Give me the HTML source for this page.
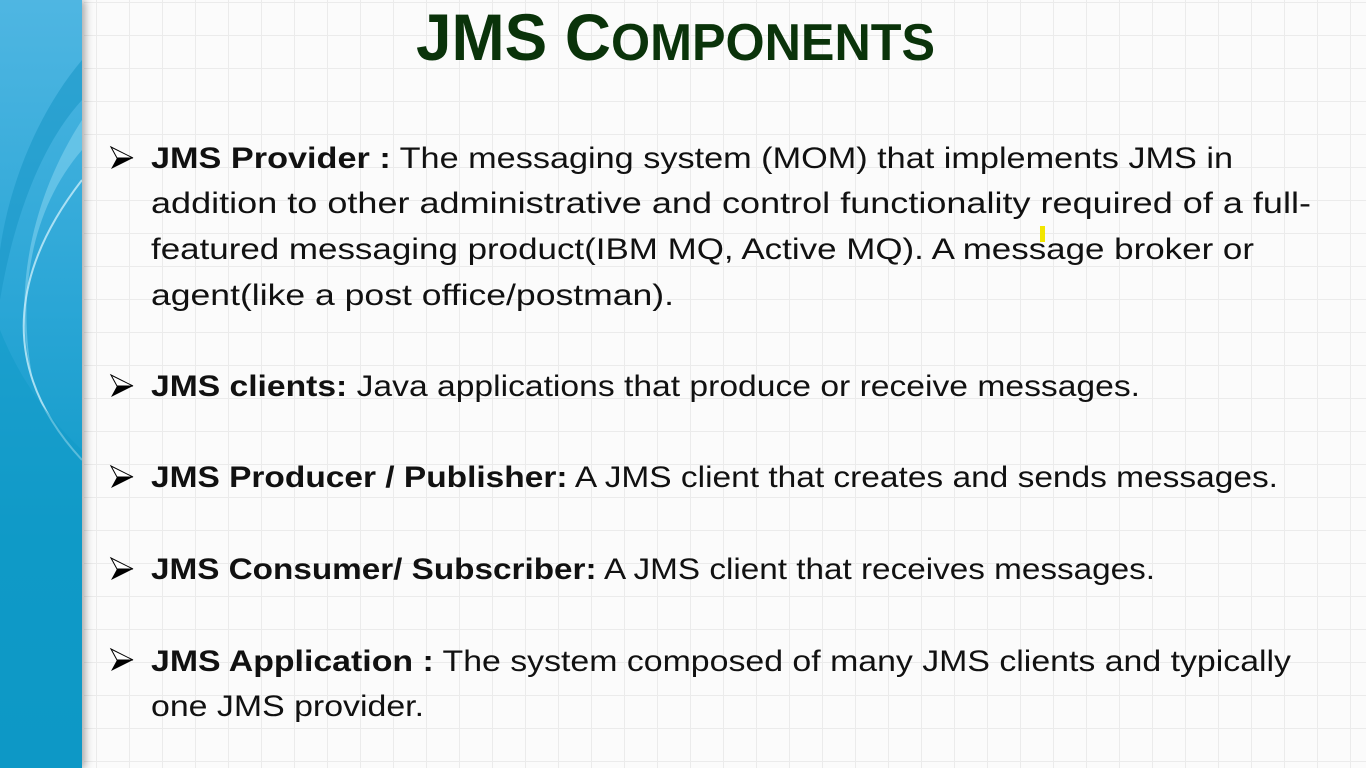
<!DOCTYPE html>
<html><head><meta charset="utf-8"><style>
html,body{margin:0;padding:0;width:1366px;height:768px;overflow:hidden;background:#fbfbfb}
.grid{position:absolute;left:84px;top:0;width:1282px;height:768px;
background-color:#fbfbfb;
background-image:linear-gradient(to right,#ebebeb 1px,transparent 1px),linear-gradient(to bottom,#ebebeb 1px,transparent 1px);
background-size:33px 33px;background-position:12px 2px}
.bar{position:absolute;left:0;top:0;width:82px;height:768px;background:linear-gradient(#4fb6e2,#2aa6d6 40%,#0f9ac7 70%,#0a97c4);box-shadow:3px 0 8px rgba(0,0,0,.35)}
svg{position:absolute;left:0;top:0}
</style></head><body>
<div class="grid"></div>
<div class="bar">
<svg width="82" height="768" viewBox="0 0 82 768">
<path d="M82 60 C40 110 10 180 0 250 L0 300 C15 210 45 140 82 100Z" fill="#1a97c8" opacity=".6"/>
<path d="M82 120 C30 200 10 300 35 390 C15 300 30 210 82 150Z" fill="#7fd0ee" opacity=".6"/>
<path d="M82 180 C20 260 -10 360 82 460" stroke="#c8eefa" stroke-width="2" fill="none" opacity=".8"/>
<path d="M0 330 C20 380 50 420 82 450 L82 768 L0 768Z" fill="#0f9ac7" opacity=".5"/>
</svg>
</div>
<svg width="1366" height="768" font-family="'Liberation Sans',sans-serif">
<text x="416" y="60" textLength="519" lengthAdjust="spacingAndGlyphs" font-weight="bold" fill="#0a330a" font-size="66">JMS C<tspan font-size="52">OMPONENTS</tspan></text>
<g>
<g id="ar"><path d="M111 147 L133 158 L111 169 L117 158 Z" fill="#000"/><path d="M111 147 L133 158 L117 158 Z" fill="#fff" stroke="#000" stroke-width="1"/></g>
<use href="#ar" y="228"/><use href="#ar" y="319"/><use href="#ar" y="411"/><use href="#ar" y="502"/>
</g>
<g font-size="30" fill="#111">
<text x="151" y="168" textLength="1082" lengthAdjust="spacingAndGlyphs"><tspan font-weight="bold">JMS Provider :</tspan>  The messaging system (MOM) that implements JMS in</text>
<text x="151" y="213" textLength="1160" lengthAdjust="spacingAndGlyphs">addition to other administrative and control functionality required of a full-</text>
<text x="151" y="259" textLength="1103" lengthAdjust="spacingAndGlyphs">featured messaging product(IBM MQ, Active MQ). A message broker or</text>
<text x="151" y="305" textLength="523" lengthAdjust="spacingAndGlyphs">agent(like a post office/postman).</text>
<text x="151" y="396" textLength="989" lengthAdjust="spacingAndGlyphs"><tspan font-weight="bold">JMS clients:</tspan> Java applications that produce or receive messages.</text>
<text x="151" y="487" textLength="1127" lengthAdjust="spacingAndGlyphs"><tspan font-weight="bold">JMS Producer / Publisher:</tspan> A JMS client that creates and sends messages.</text>
<text x="151" y="579" textLength="1004" lengthAdjust="spacingAndGlyphs"><tspan font-weight="bold">JMS Consumer/ Subscriber:</tspan> A JMS client that receives messages.</text>
<text x="151" y="671" textLength="1140" lengthAdjust="spacingAndGlyphs"><tspan font-weight="bold">JMS Application :</tspan> The system composed of many JMS clients and typically</text>
<text x="151" y="716" textLength="273" lengthAdjust="spacingAndGlyphs">one JMS provider.</text>
</g>
<rect x="1040" y="226" width="5" height="16" fill="#f2e600"/>
</svg>
</body></html>
